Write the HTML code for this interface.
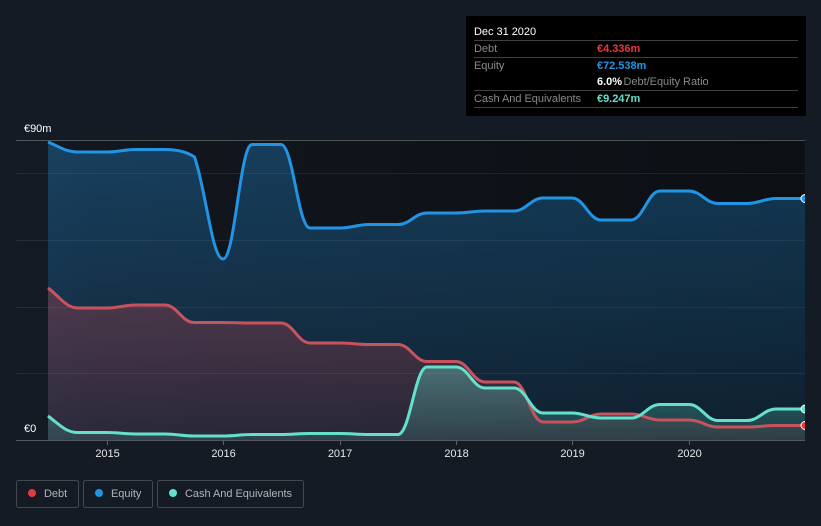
<!DOCTYPE html>
<html><head><meta charset="utf-8">
<style>
html,body{margin:0;padding:0;background:#151b25;width:821px;height:526px;overflow:hidden}
svg{display:block}
text{font-family:"Liberation Sans",sans-serif;font-size:11px;letter-spacing:-.03px}
</style></head><body>
<svg width="821" height="526" viewBox="0 0 821 526" xmlns="http://www.w3.org/2000/svg">
<defs>
<linearGradient id="bg" x1="0" y1="0" x2="1" y2="0"><stop offset="0" stop-color="#151b25"/><stop offset=".1" stop-color="#12161e"/><stop offset="1" stop-color="#0c0f13"/></linearGradient>
<linearGradient id="gb" gradientUnits="userSpaceOnUse" x1="0" y1="140" x2="0" y2="440"><stop offset="0" stop-color="#2196e6" stop-opacity=".32"/><stop offset="1" stop-color="#2196e6" stop-opacity=".12"/></linearGradient>
<linearGradient id="gr" gradientUnits="userSpaceOnUse" x1="0" y1="288" x2="0" y2="440"><stop offset="0" stop-color="#e8474f" stop-opacity=".27"/><stop offset="1" stop-color="#e8474f" stop-opacity=".1"/></linearGradient>
<linearGradient id="gc" gradientUnits="userSpaceOnUse" x1="0" y1="367" x2="0" y2="440"><stop offset="0" stop-color="#65e0cc" stop-opacity=".36"/><stop offset="1" stop-color="#65e0cc" stop-opacity=".14"/></linearGradient>
<clipPath id="pc"><rect x="16" y="136" width="789" height="305"/></clipPath>
<path id="eq" d="M48 142C60 147 66 152 78 152L107 152C119 152 124 149.5 136 149.5L165 149.5C177 149.5 187 152 194.5 157C206 190 212 259 223 259C235 259 240 144.5 252 144.5L281 144.5C293 144.5 298 228 310 228L340 228C352 228 357 224.5 369 224.5L398 224.5C410 224.5 415 213 427 213L456 213C468 213 473 211 485 211L514 211C526 211 531 198 543 198L572 198C584 198 589 220 601 220L631 220C643 220 648 191 660 191L689 191C701 191 706 203.5 718 203.5L747 203.5C759 203.5 764 198.5 776 198.5L805 198.5"/>
<path id="de" d="M48 288C60 297 66 308 78 308L107 308C119 308 124 305 136 305L165 305C177 305 182 322.5 194 322.5L223 322.5C235 322.5 240 323 252 323L281 323C293 323 298 343 310 343L340 343C352 343 357 344.5 369 344.5L398 344.5C410 344.5 415 361.5 427 361.5L456 361.5C468 361.5 473 382 485 382L514 382C526 382 531 422 543 422L572 422C584 422 589 414 601 414L631 414C643 414 648 420 660 420L689 420C701 420 706 427 718 427L747 427C759 427 764 425.5 776 425.5L805 425.5"/>
<path id="ca" d="M48 416C60 425 66 432.5 78 432.5L107 432.5C119 432.5 124 434 136 434L165 434C177 434 182 436 194 436L223 436C235 436 240 434.5 252 434.5L281 434.5C293 434.5 298 433.5 310 433.5L340 433.5C352 433.5 357 434.5 369 434.5L398 434.5C410 434.5 415 367 427 367L456 367C468 367 473 388 485 388L514 388C526 388 531 413 543 413L572 413C584 413 589 418 601 418L631 418C643 418 648 404.5 660 404.5L689 404.5C701 404.5 706 420.5 718 420.5L747 420.5C759 420.5 764 409 776 409L805 409"/>
</defs>
<rect width="821" height="526" fill="#151b25"/>
<rect x="16" y="140" width="789" height="300" fill="url(#bg)"/>
<g fill="none" stroke="#fff">
<path d="M16 173.500H805M16 240.500H805M16 307.500H805M16 373.500H805" stroke-opacity=".08"/>
<path d="M16 140.500H805M16 440.500H805" stroke-opacity=".27"/>
<path d="M107.500 441V445M223.500 441V445M340.500 441V445M456.500 441V445M572.500 441V445M689.500 441V445" stroke-opacity=".3"/>
</g>
<g clip-path="url(#pc)">
<path d="M48 142C60 147 66 152 78 152L107 152C119 152 124 149.5 136 149.5L165 149.5C177 149.5 187 152 194.5 157C206 190 212 259 223 259C235 259 240 144.5 252 144.5L281 144.5C293 144.5 298 228 310 228L340 228C352 228 357 224.5 369 224.5L398 224.5C410 224.5 415 213 427 213L456 213C468 213 473 211 485 211L514 211C526 211 531 198 543 198L572 198C584 198 589 220 601 220L631 220C643 220 648 191 660 191L689 191C701 191 706 203.5 718 203.5L747 203.5C759 203.5 764 198.5 776 198.5L805 198.5V440H48Z" fill="url(#gb)"/>
<path d="M48 288C60 297 66 308 78 308L107 308C119 308 124 305 136 305L165 305C177 305 182 322.5 194 322.5L223 322.5C235 322.5 240 323 252 323L281 323C293 323 298 343 310 343L340 343C352 343 357 344.5 369 344.5L398 344.5C410 344.5 415 361.5 427 361.5L456 361.5C468 361.5 473 382 485 382L514 382C526 382 531 422 543 422L572 422C584 422 589 414 601 414L631 414C643 414 648 420 660 420L689 420C701 420 706 427 718 427L747 427C759 427 764 425.5 776 425.5L805 425.5V440H48Z" fill="url(#gr)"/>
<path d="M48 416C60 425 66 432.5 78 432.5L107 432.5C119 432.5 124 434 136 434L165 434C177 434 182 436 194 436L223 436C235 436 240 434.5 252 434.5L281 434.5C293 434.5 298 433.5 310 433.5L340 433.5C352 433.5 357 434.5 369 434.5L398 434.5C410 434.5 415 367 427 367L456 367C468 367 473 388 485 388L514 388C526 388 531 413 543 413L572 413C584 413 589 418 601 418L631 418C643 418 648 404.5 660 404.5L689 404.5C701 404.5 706 420.5 718 420.5L747 420.5C759 420.5 764 409 776 409L805 409V440H48Z" fill="url(#gc)"/>
<g fill="none" stroke-width="3" stroke-linejoin="round">
<use href="#eq" stroke="#2194e3"/>
<use href="#de" stroke="#c9525f"/>
<use href="#ca" stroke="#64e0cd"/>
</g>
<circle cx="805" cy="198.500" r="4" fill="#2194e3" stroke="#fff"/>
<circle cx="805" cy="425.500" r="4" fill="#e8383f" stroke="#fff"/>
<circle cx="805" cy="409" r="4" fill="#64e0cd" stroke="#fff"/>
</g>
<text x="24" y="132" fill="#fff">€90m</text>
<text x="24" y="432" fill="#fff">€0</text>
<g fill="#e6e6e6" text-anchor="middle">
<text x="107.500" y="457">2015</text><text x="223.500" y="457">2016</text><text x="340" y="457">2017</text><text x="456.500" y="457">2018</text><text x="572.500" y="457">2019</text><text x="689.500" y="457">2020</text>
</g>
<rect x="466" y="16" width="340" height="100" fill="#000"/>
<path d="M474 40.500H798M474 57.500H798M474 90.500H798M474 107.500H798" stroke="#fff" stroke-opacity=".25" fill="none"/>
<text x="474" y="35" fill="#fff">Dec 31 2020</text>
<g fill="#8a8a8a">
<text x="474" y="52">Debt</text><text x="474" y="69">Equity</text><text x="474" y="102">Cash And Equivalents</text>
<text x="623.500" y="85">Debt/Equity Ratio</text>
</g>
<g>
<text x="597" y="52" fill="#e8383f" style="font-weight:700">€4.336m</text>
<text x="597" y="69" fill="#2194e3" style="font-weight:700">€72.538m</text>
<text x="597" y="85" fill="#fff" style="font-weight:700">6.0%</text>
<text x="597" y="102" fill="#64e0cd" style="font-weight:700">€9.247m</text>
</g>
<g fill="none" stroke="#fff" stroke-opacity=".2">
<rect x="16.500" y="480.500" width="62" height="27" rx="2"/>
<rect x="83.500" y="480.500" width="69" height="27" rx="2"/>
<rect x="157.500" y="480.500" width="146" height="27" rx="2"/>
</g>
<circle cx="32" cy="493" r="4" fill="#e8383f"/>
<circle cx="99" cy="493" r="4" fill="#2194e3"/>
<circle cx="173" cy="493" r="4" fill="#64e0cd"/>
<g fill="#b0b3b8">
<text x="44" y="497">Debt</text><text x="111" y="497">Equity</text><text x="185" y="497">Cash And Equivalents</text>
</g>
</svg>
</body></html>
